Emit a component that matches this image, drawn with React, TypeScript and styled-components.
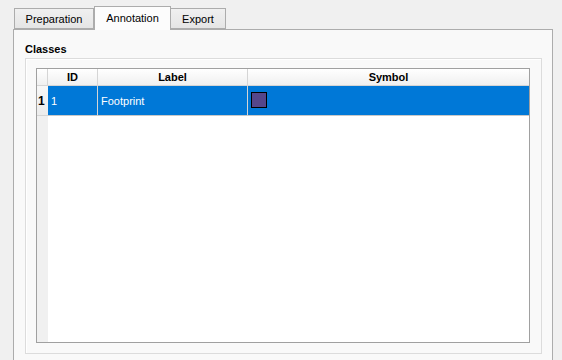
import { Fragment } from 'react';
import styled, { createGlobalStyle } from 'styled-components';

const GlobalStyle = createGlobalStyle`
	html, body {
		margin: 0;
		padding: 0;
		background: #f0f0f0;
		font-family: 'Liberation Sans', Arial, sans-serif;
		font-size: 11px;
		color: #000;
	}
	#root {
		width: 562px;
		height: 360px;
		overflow: hidden;
	}
`;

const Window = styled.div`
	display: flex;
	flex-direction: column;
	padding: 6px 9px 0 13px;
	height: 360px;
	box-sizing: border-box;
`;

const TabBar = styled.div`
	display: flex;
	align-items: flex-end;
	padding-left: 1px;
	height: 23px;
	position: relative;
	z-index: 1;
`;

const Tab = styled.div<{ $active?: boolean; $width: number; $first?: boolean }>`
	box-sizing: border-box;
	width: ${(p) => p.$width}px;
	height: ${(p) => (p.$active ? 24 : 21)}px;
	margin-bottom: ${(p) => (p.$active ? -1 : 0)}px;
	margin-left: ${(p) => (p.$active || p.$first ? 0 : -1)}px;
	border: 1px solid #acacac;
	border-bottom: ${(p) => (p.$active ? 'none' : '1px solid #acacac')};
	background: ${(p) => (p.$active ? '#fcfcfc' : 'linear-gradient(#f0f0f0, #e5e5e5)')};
	display: flex;
	align-items: center;
	justify-content: center;
	padding-bottom: ${(p) => (p.$active ? 2 : 0)}px;
	color: #000;
	white-space: nowrap;
	position: relative;
	z-index: ${(p) => (p.$active ? 2 : 1)};
`;

const Pane = styled.div`
	flex: 1;
	border: 1px solid #acacac;
	border-bottom: none;
	background: #f9f9f9;
	padding: 13px 10px 0 11px;
	display: flex;
	flex-direction: column;
`;

const GroupTitle = styled.div`
	font-weight: bold;
	height: 15px;
	line-height: 13px;
`;

const Group = styled.div`
	height: 296px;
	box-sizing: border-box;
	border: 1px solid #dcdcdc;
	box-shadow: inset 1px 1px 0 #ffffff;
	padding: 9px 11px 10px 10px;
	display: flex;
`;

const Table = styled.div`
	flex: 1;
	border: 1px solid #a0a0a0;
	background: #ffffff;
	display: grid;
	grid-template-columns: 11px 50px 150px 1fr;
	grid-template-rows: 17px 30px 1fr;
`;

const HeaderCell = styled.div<{ $last?: boolean }>`
	background: linear-gradient(#ffffff, #f0f0f0);
	border-bottom: 1px solid #d5d5d5;
	border-right: ${(p) => (p.$last ? 'none' : '1px solid #d5d5d5')};
	font-weight: bold;
	display: flex;
	align-items: center;
	justify-content: center;
	line-height: 1;
`;

const RowHead = styled.div`
	background: linear-gradient(#f7f7f7, #ececec);
	border-bottom: 1px solid #d5d5d5;
	font-weight: bold;
	display: flex;
	align-items: center;
	padding-left: 1px;
	font-size: 12px;
`;

const Cell = styled.div<{ $last?: boolean }>`
	background: #0078d7;
	color: #ffffff;
	border-bottom: 1px solid #c8c8c8;
	border-right: ${(p) => (p.$last ? 'none' : '1px solid #d5d5d5')};
	display: flex;
	align-items: center;
	padding-left: 3px;
`;

const Swatch = styled.div<{ $color: string }>`
	width: 14px;
	height: 14px;
	border: 1px solid #000;
	background: ${(p) => p.$color};
	margin-bottom: 1px;
`;

const EmptyHead = styled.div`
	background: #f0f0f0;
`;

const Empty = styled.div`
	grid-column: 2 / 5;
`;

const classes = [{ id: 1, label: 'Footprint', color: '#55468a' }];

const App = () => {
	return (
		<>
			<GlobalStyle />
			<Window>
				<TabBar>
					<Tab $first $width={80}>Preparation</Tab>
					<Tab $active $width={77}>Annotation</Tab>
					<Tab $width={56}>Export</Tab>
				</TabBar>
				<Pane>
					<GroupTitle>Classes</GroupTitle>
					<Group>
						<Table>
							<HeaderCell />
							<HeaderCell>ID</HeaderCell>
							<HeaderCell>Label</HeaderCell>
							<HeaderCell $last>Symbol</HeaderCell>
							{classes.map((c, i) => (
								<Fragment key={c.id}>
									<RowHead>{i + 1}</RowHead>
									<Cell>{c.id}</Cell>
									<Cell>{c.label}</Cell>
									<Cell $last>
										<Swatch $color={c.color} />
									</Cell>
								</Fragment>
							))}
							<EmptyHead />
							<Empty />
						</Table>
					</Group>
				</Pane>
			</Window>
		</>
	);
};

export default App;
